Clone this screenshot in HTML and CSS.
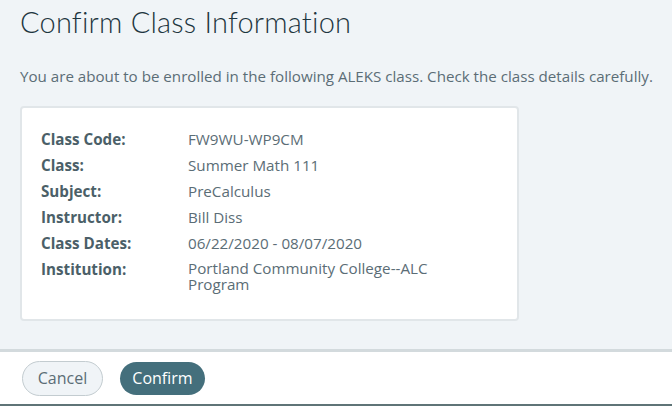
FILE: index.html
```html
<!DOCTYPE html>
<html>
<head>
<meta charset="utf-8">
<link rel="stylesheet" href="styles.css">
</head>
<body>
<div class="page">
  <main class="content">
    <h1 class="title">Confirm Class Information</h1>
    <p class="intro">You are about to be enrolled in the following ALEKS class. Check the class details carefully.</p>
    <section class="card">
      <dl class="details">
        <dt>Class Code:</dt><dd>FW9WU-WP9CM</dd>
        <dt>Class:</dt><dd>Summer Math 111</dd>
        <dt>Subject:</dt><dd>PreCalculus</dd>
        <dt>Instructor:</dt><dd>Bill Diss</dd>
        <dt>Class Dates:</dt><dd>06/22/2020 - 08/07/2020</dd>
        <dt>Institution:</dt><dd class="wrap">Portland Community College--ALC Program</dd>
      </dl>
    </section>
  </main>
  <footer class="footer">
    <button class="btn btn-cancel">Cancel</button>
    <button class="btn btn-confirm">Confirm</button>
  </footer>
</div>
</body>
</html>
```
FILE: styles.css
```css
* { box-sizing: border-box; }
html, body { margin: 0; padding: 0; }
body {
  width: 672px;
  height: 406px;
  background: #f0f4f7;
  font-family: "Open Sans", Lato, sans-serif;
  overflow: hidden;
}
.page {
  display: flex;
  flex-direction: column;
  height: 406px;
}
.content {
  flex: 1;
  padding: 4px 20px 0 20px;
}
.title {
  margin: 0;
  font-family: Lato, sans-serif;
  font-size: 29px;
  font-weight: 300;
  color: #1e3640;
  line-height: 36px;
  letter-spacing: 0.2px;
}
.intro {
  margin: 27px 0 0 0;
  font-size: 15.15px;
  line-height: 18px;
  color: #5b6d76;
  white-space: nowrap;
}
.card {
  margin-top: 21px;
  width: 499px;
  height: 215px;
  background: #fff;
  border: 2px solid #e1e6e9;
  border-radius: 4px;
  padding: 22px 19px;
}
.details {
  margin: 0;
  display: grid;
  grid-template-columns: 147px 1fr;
  row-gap: 8px;
  font-size: 15.2px;
  line-height: 18px;
}
.details dt {
  font-weight: 700;
  color: #4b5f68;
}
.details dd {
  margin: 0;
  color: #5b6d76;
}
.details dd.wrap {
  max-width: 270px;
  line-height: 16px;
}
.footer {
  height: 57px;
  background: #fff;
  border-top: 3px solid #d3dadd;
  border-bottom: 2px solid #5f7477;
  display: flex;
  align-items: center;
  gap: 17px;
  padding: 0 22px;
}
.btn {
  font-family: inherit;
  font-size: 16px;
  border-radius: 18px;
  height: 35px;
  padding: 0;
  cursor: pointer;
}
.btn-cancel {
  width: 81px;
  background: #f0f4f7;
  border: 1px solid #c3ccd0;
  color: #5b6d76;
}
.btn-confirm {
  width: 85px;
  height: 33px;
  background: #446f7c;
  border: none;
  color: #fff;
}
```
